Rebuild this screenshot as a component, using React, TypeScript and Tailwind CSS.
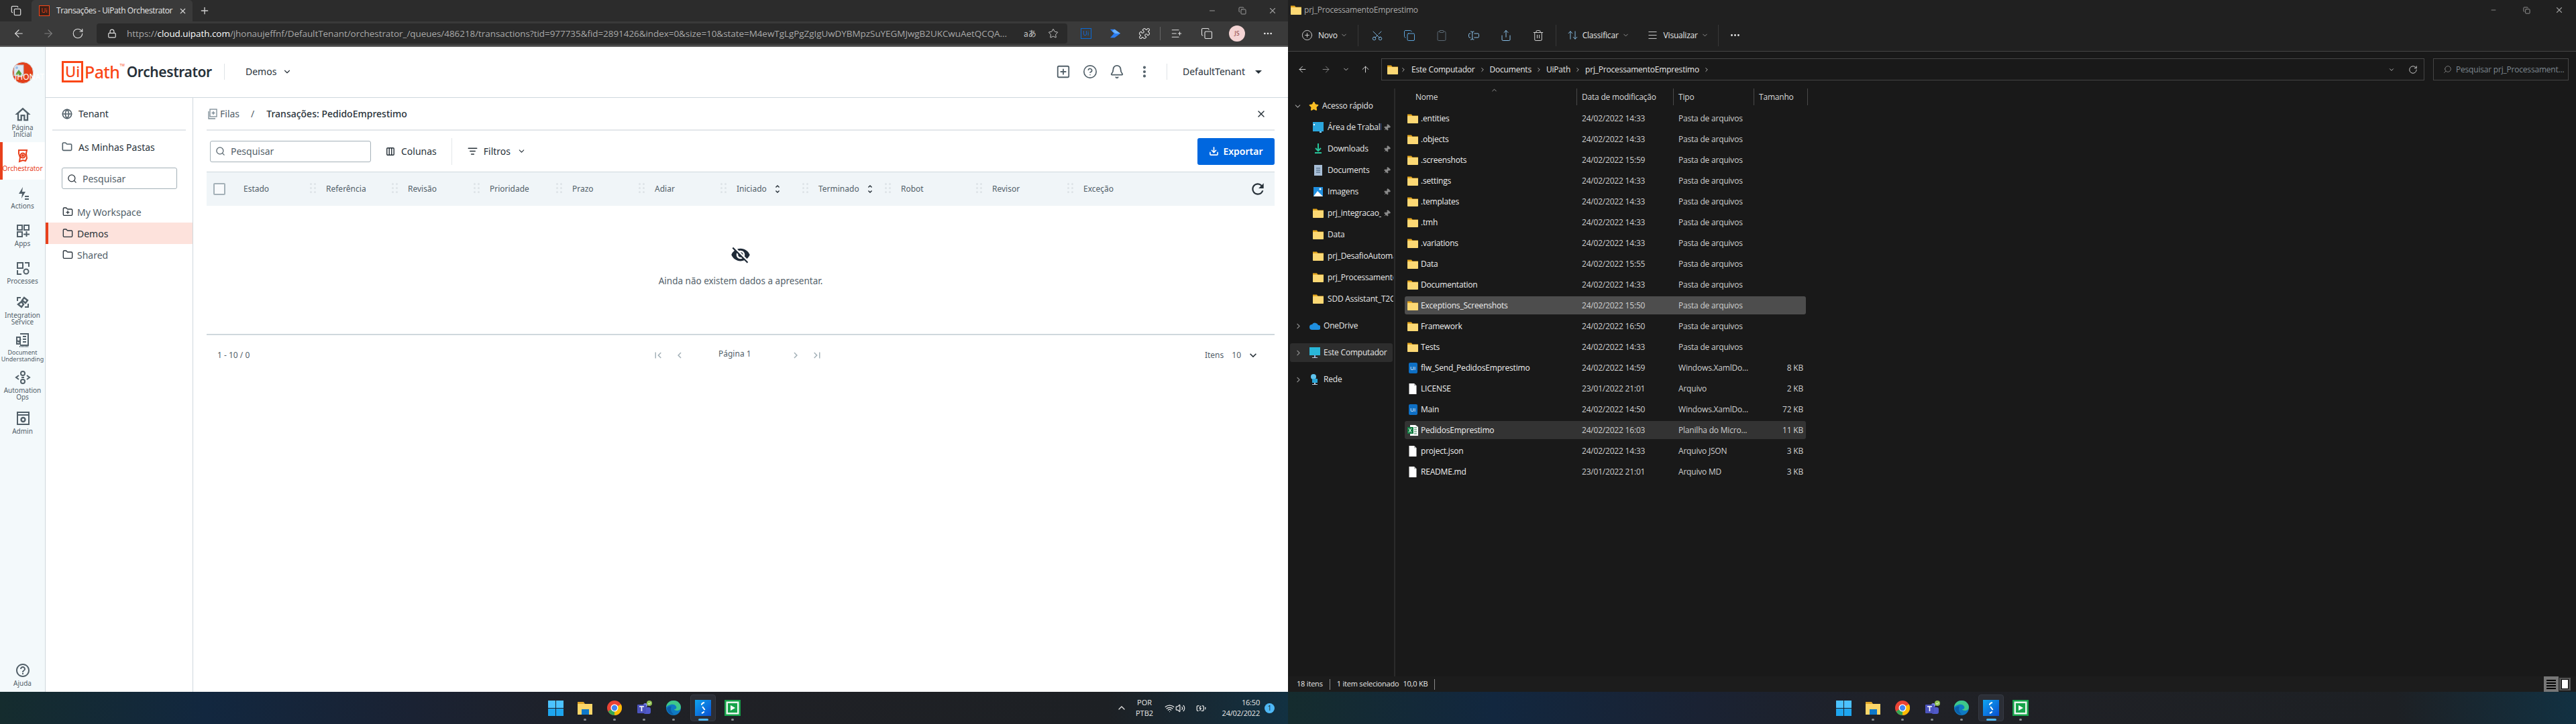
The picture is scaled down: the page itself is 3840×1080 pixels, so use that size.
import React from "react";
import { ArrowLeft, ArrowRight, RotateCw, Lock, X, Plus, Minus, Copy, ChevronDown, ChevronRight, ChevronUp, Search, Ellipsis, EllipsisVertical, Bell, CircleHelp, SquarePlus, Globe, Folder, FolderPlus, Columns3, Download, ListFilter, Scissors, Share, Trash2, ArrowUpDown, Menu, ArrowUp, Pin, CirclePlus, Clipboard, TextCursorInput, Puzzle, ListPlus, Star, Wifi, Volume2, BatteryCharging, Search as Loupe } from "lucide-react";
import { MdVisibilityOff, MdHelpOutline, MdOutlineHome, MdChevronLeft, MdChevronRight, MdFirstPage, MdLastPage, MdKeyboardArrowDown, MdArrowDropDown, MdRefresh, MdUnfoldMore } from "react-icons/md";

const rail = "#526069";

function I({ children, s = 24 }: { children: React.ReactNode; s?: number }) {
  return <svg width={s} height={s} viewBox="0 0 24 24" fill="none" stroke={rail} strokeWidth="2">{children}</svg>;
}

const railIcons: Record<string, React.ReactNode> = {
  actions: <I><path d="M12 3 6 13h5l-1 7 6-10h-5z" fill={rail} stroke="none" /><path d="M15 17h6M15 21h6" /></I>,
  apps: <I><rect x="4" y="4" width="7" height="7" /><rect x="14" y="4" width="7" height="7" /><rect x="4" y="14" width="7" height="7" /><path d="M17.5 13v8M13 17.5h9" /></I>,
  proc: <I><rect x="4" y="4" width="8" height="8" /><path d="M15 4h6v6M4 15v6h6" /><circle cx="17" cy="17" r="3.5" /></I>,
  integ: <I><path d="M4 10V5h5M20 14v5h-5" /><path d="M14 5l5 4-3 4-5-4zM10 11l3 4-3 4-5-4z" strokeWidth="2.4" /></I>,
  doc: <I><path d="M8 3h12v17H8M3 8h5v10H3z" /><path d="M12 7h5M12 11h5M12 15h5M4 13l2 2 3-4" /><path d="M7 22h14" strokeDasharray="1 1" /></I>,
  ops: <I><circle cx="12" cy="6" r="3" /><circle cx="12" cy="18" r="3" /><path d="m6 9-4 3 4 3M18 9l4 3-4 3M10 12h4" /></I>,
  admin: <I><rect x="4" y="3" width="17" height="18" /><path d="M4 7h17" /><circle cx="12.5" cy="14" r="3" strokeWidth="2.4" /></I>,
};

function RailItem({ icon, l1, l2, small }: { icon: React.ReactNode; l1: string; l2?: string; small?: boolean }) {
  const t = small ? "text-[9px] leading-[10px]" : "text-[10px] leading-[10px]";
  return (
    <div className="h-14 flex flex-col items-center justify-center pb-1">
      <div className="h-6 flex items-center justify-center">{icon}</div>
      <div className={`mt-[2px] ${t} text-[#526069] whitespace-nowrap text-center`}>{l1}</div>
      {l2 && <div className={`${t} text-[#526069] whitespace-nowrap text-center`}>{l2}</div>}
    </div>
  );
}

function Rail() {
  return (
    <div className="w-[68px] shrink-0 h-full bg-[#f3f9fb] border-r border-[#cfd8dd] flex flex-col overflow-hidden">
      <div className="h-[86px] pt-[22px] pl-[18px] relative">
        <div className="w-8 h-[33px] rounded-full bg-[#e23f1a] border border-[#ddd] overflow-hidden flex items-start">
          <svg width="18" height="18" viewBox="0 0 18 18" className="ml-[1px] mt-[3px]"><rect x="1" y="1" width="14" height="16" fill="#dfe8f3" stroke="#b8c2cc" /><path d="M2 16 8 8l6 8z" fill="#5a9e3a" /><circle cx="5" cy="5" r="2" fill="#9cc1ea" /></svg>
        </div>
        <div className="absolute left-[22px] top-[38px] text-[12px] leading-[14px] text-white whitespace-nowrap">JHONAT</div>
      </div>
      <RailItem icon={<MdOutlineHome size={28} color={rail} />} l1="Página" l2="Inicial" />
      <div className="h-14 bg-white border-l-4 border-[#e8401c] flex flex-col items-center justify-center pb-1 w-[67px]">
        <div className="h-6 flex items-center justify-center -ml-1">
          <I><g stroke="#e8401c"><path d="M6 4h12l-1 5 1 7-2 4-4-1-5 2 1-6-2-6z" strokeWidth="2" /><circle cx="12" cy="12" r="3.5" /><circle cx="12" cy="12" r="1" fill="#e8401c" /></g></I>
        </div>
        <div className="mt-[2px] text-[10px] leading-[10px] text-[#e8401c] -ml-1 whitespace-nowrap">Orchestrator</div>
      </div>
      <RailItem icon={railIcons.actions} l1="Actions" />
      <RailItem icon={railIcons.apps} l1="Apps" />
      <RailItem icon={railIcons.proc} l1="Processes" />
      <RailItem icon={railIcons.integ} l1="Integration" l2="Service" />
      <RailItem small icon={railIcons.doc} l1="Document" l2="Understanding" />
      <RailItem icon={railIcons.ops} l1="Automation" l2="Ops" />
      <RailItem icon={railIcons.admin} l1="Admin" />
      <div className="mt-auto mb-[-4px]"><RailItem icon={<MdHelpOutline size={24} color={rail} />} l1="Ajuda" /></div>
    </div>
  );
}

function Logo() {
  return (
    <div className="flex items-center pl-6 w-[266px] shrink-0 font-['Noto_Sans',sans-serif]">
      <div className="w-8 h-8 border-[3px] border-[#fa4616] text-[#fa4616] text-[22px] leading-[24px] text-center font-medium">Ui</div>
      <div className="ml-[2px] text-[#fa4616] text-[25px] font-medium leading-8 tracking-[-0.6px]">Path</div>
      <div className="text-[#fa4616] text-[5px] self-start mt-[3px] mr-[3px]">TM</div>
      <div className="text-[#273139] text-[21px] font-semibold leading-8 tracking-[-0.4px]">Orchestrator</div>
    </div>
  );
}

function Header() {
  return (
    <div className="h-[76px] shrink-0 border-b border-[#cfd8dd] flex items-center pb-[2px]">
      <Logo />
      <div className="w-px h-6 bg-[#dfe3e6]" />
      <div className="ml-[31px] flex items-center gap-[9px] text-[14px] text-[#273139]">Demos <ChevronDown size={14} color="#273139" /></div>
      <div className="ml-auto flex items-center">
        <SquarePlus size={22} color="#526069" strokeWidth={2} />
        <CircleHelp size={22} color="#526069" strokeWidth={1.8} className="ml-[18px]" />
        <Bell size={22} color="#526069" strokeWidth={2} className="ml-[18px]" />
        <EllipsisVertical size={22} color="#526069" strokeWidth={2.5} className="ml-[19px]" />
        <div className="w-px h-6 bg-[#dfe3e6] ml-[22px]" />
        <div className="ml-[23px] text-[14px] text-[#273139] whitespace-nowrap">DefaultTenant</div>
        <MdArrowDropDown size={24} color="#273139" className="ml-[8px] mr-[32px]" />
      </div>
    </div>
  );
}

function Folders() {
  return (
    <div className="w-[220px] shrink-0 border-r border-[#cfd8dd] text-[14px] text-[#273139] h-full">
      <div className="mx-[10px] h-[49px] border-b-2 border-[#e3e7ea] flex items-center pl-[14px] gap-[9px]"><Globe size={16} color="#526069" strokeWidth={2.4} />Tenant</div>
      <div className="h-[48px] flex items-center pl-[24px] gap-[9px]"><Folder size={16} color="#526069" strokeWidth={2.4} />As Minhas Pastas</div>
      <div className="ml-6 mt-[7px] w-[172px] h-8 border border-[#a4b1b8] rounded-[3px] flex items-center pl-[7px] gap-[8px] text-[#526069]"><Search size={15} color="#273139" />Pesquisar</div>
      <div className="mt-[18px]">
        <div className="h-8 pl-[25px] flex items-center gap-[6px] text-[#526069]"><FolderPlus size={16} color="#273139" />My Workspace</div>
        <div className="h-8 pl-[21px] flex items-center gap-[6px] bg-[#fde2dc] border-l-4 border-[#e8401c]"><Folder size={16} color="#273139" />Demos</div>
        <div className="h-8 pl-[25px] flex items-center gap-[6px] text-[#526069]"><Folder size={16} color="#273139" />Shared</div>
      </div>
    </div>
  );
}

const cols = [
  { t: "Estado", w: "w-[123px]" }, { t: "Referência", w: "w-[122px]" }, { t: "Revisão", w: "w-[122px]" },
  { t: "Prioridade", w: "w-[123px]" }, { t: "Prazo", w: "w-[123px]" }, { t: "Adiar", w: "w-[122px]" },
  { t: "Iniciado", w: "w-[122px]", sort: true }, { t: "Terminado", w: "w-[123px]", sort: true },
  { t: "Robot", w: "w-[136px]" }, { t: "Revisor", w: "w-[136px]" }, { t: "Exceção", w: "w-[240px]" },
];

function Dots() {
  return <div className="absolute left-[-24px] top-0 grid grid-cols-2 gap-[3px] w-[9px]">{[0, 1, 2, 3, 4, 5].map((i) => <span key={i} className="w-[3px] h-[3px] bg-[#dde3e7] rounded-full" />)}</div>;
}

function MainPane() {
  return (
    <div className="flex-1 pl-5 pr-5 flex flex-col text-[#273139]">
      <div className="h-[49px] border-b-2 border-[#e3e7ea] flex items-center pl-[2px] text-[14px]">
        <svg width="14" height="16" viewBox="0 0 14 16" fill="none" stroke="#7a8a94" strokeWidth="1.3"><rect x="3" y="1" width="10" height="11" /><path d="M1 4v11h10M8 4v5M5.500 6.500h5" /></svg>
        <span className="ml-[4px] text-[#526069]">Filas</span>
        <span className="ml-[17px] text-[#526069]">/</span>
        <span className="ml-[18px] font-medium whitespace-nowrap">Transações: PedidoEmprestimo</span>
        <X size={16} color="#273139" className="ml-auto mr-3" />
      </div>
      <div className="h-[61px] flex items-center text-[14px]">
        <div className="ml-[5px] w-[240px] h-8 border border-[#a4b1b8] rounded-[3px] flex items-center pl-[7px] gap-[8px] text-[#526069]"><Search size={15} color="#526069" />Pesquisar</div>
        <Columns3 size={14} color="#273139" className="ml-[22px]" strokeWidth={2.4} />
        <span className="ml-[9px]">Colunas</span>
        <div className="ml-[22px] w-px h-10 bg-[#e3e7ea]" />
        <ListFilter size={15} color="#273139" className="ml-[23px]" strokeWidth={2.4} />
        <span className="ml-[9px]">Filtros</span>
        <ChevronDown size={13} color="#273139" className="ml-[10px]" />
        <div className="ml-auto w-[115px] h-10 bg-[#0067df] rounded-[3px] flex items-center justify-center gap-[6px] text-white font-semibold"><Download size={15} color="#fff" strokeWidth={2.6} />Exportar</div>
      </div>
      <div className="h-[51px] bg-[#f0f5f8] border-t border-[#cfd8dd] flex items-center text-[12px] text-[#526069]">
        <div className="w-[55px] pl-[10px] shrink-0"><div className="w-[18px] h-[18px] border-2 border-[#a4b1b8] rounded-[2px] bg-white/50" /></div>
        {cols.map((c, i) => (
          <div key={c.t} className={`${c.w} shrink-0 relative flex items-center gap-2`}>
            {i > 0 && <Dots />}
            <span>{c.t}</span>
            {c.sort && <MdUnfoldMore size={16} color="#273139" />}
          </div>
        ))}
        <MdRefresh size={26} color="#273139" className="ml-auto mr-[12px]" />
      </div>
      <div className="h-[193px] border-b-2 border-[#cfd8dd] flex flex-col items-center pt-[58px]">
        <MdVisibilityOff size={30} color="#1f2a37" />
        <div className="mt-[14px] text-[13.5px] leading-5 text-[#526069]">Ainda não existem dados a apresentar.</div>
      </div>
      <div className="h-[56px] pt-[3px] flex items-center text-[12px] text-[#526069] relative">
        <span className="ml-[16px] w-[649px] shrink-0">1 - 10 / 0</span>
        <MdFirstPage size={18} color="#a4b1b8" className="-ml-[1px]" />
        <MdChevronLeft size={18} color="#a4b1b8" className="ml-[14px]" />
        <span className="ml-[49px] -mt-[3px] whitespace-nowrap">Página 1</span>
        <MdChevronRight size={18} color="#a4b1b8" className="ml-[57px]" />
        <MdLastPage size={18} color="#a4b1b8" className="ml-[14px]" />
        <span className="ml-auto">Itens</span>
        <span className="ml-[12px]">10</span>
        <MdKeyboardArrowDown size={20} color="#273139" className="ml-[8px] mr-[22px]" />
      </div>
    </div>
  );
}

function Tile({ active, dot = true, children }: { active?: boolean; dot?: boolean; children: React.ReactNode }) {
  return (
    <div className={`w-[44px] h-12 flex flex-col items-center relative`}>
      <div className={`w-[38px] h-[40px] mt-[4px] rounded-[4px] flex items-center justify-center ${active ? "bg-[#2b2e36] border border-[#363a44]" : ""}`}>{children}</div>
      {dot && <div className={`absolute bottom-[5px] h-[3px] rounded-[2px] ${active ? "w-[15px] bg-[#4fb8f5]" : "w-[4px] bg-[#8b8f94]"}`} />}
    </div>
  );
}

function TaskIcons({ id }: { id: string }) {
  return (
    <div className="flex items-center pl-[806px]">
      <Tile dot={false}><svg width="23" height="23" viewBox="0 0 23 23"><rect width="11" height="11" fill="#4cc2ff" /><rect x="12" width="11" height="11" fill="#4cc2ff" /><rect y="12" width="11" height="11" fill="#1ea5ee" /><rect x="12" y="12" width="11" height="11" fill="#1ea5ee" /></svg></Tile>
      <Tile><svg width="24" height="24" viewBox="0 0 24 24"><path d="M1 3h9l2 3h11v16H1z" fill="#e0a526" /><rect x="1" y="6" width="22" height="16" fill="#fcd669" /><rect x="7" y="14" width="11" height="8" fill="#0f78c8" /></svg></Tile>
      <Tile><svg width="24" height="24" viewBox="0 0 24 24"><circle cx="12" cy="12" r="11" fill="#ea4335" /><path d="M12 12 2.500 17A11 11 0 0 0 12 23z" fill="#34a853" /><path d="M12 12v11A11 11 0 0 0 23 12c0-2-.5-4-1.500-5.500z" fill="#fbbc05" /><circle cx="12" cy="12" r="5.500" fill="#fff" /><circle cx="12" cy="12" r="4.200" fill="#4285f4" /></svg></Tile>
      <Tile><svg width="24" height="24" viewBox="0 0 24 24"><circle cx="14" cy="8" r="3" fill="#7b83eb" /><rect x="11" y="11" width="11" height="10" rx="3" fill="#5059c9" /><rect x="2" y="7" width="13" height="13" rx="1" fill="#4b53bc" /><path d="M5 10h7M8.500 10v7" stroke="#fff" strokeWidth="1.600" /><circle cx="20" cy="5" r="4" fill="#92c353" /><path d="m18 5 1.500 1.500L22 4" stroke="#fff" fill="none" /></svg></Tile>
      <Tile><svg width="24" height="24" viewBox="0 0 24 24"><circle cx="12" cy="12" r="11" fill="#0f7ac4" /><path d="M1 12C1 5 6 1 12 1c7 0 11 5 11 10 0 3-3 5-6 5-2 0-4-1-4-2 3 0 4-2 3-4-1-3-5-4-8-3-4 1-7 3-7 5z" fill="#3ec78a" /><path d="M9 10c-2 3-1 9 4 12-6 0-10-4-11-9 1-2 4-4 7-3z" fill="#0b5ea8" /></svg></Tile>
      <Tile active><svg width="24" height="24" viewBox="0 0 24 24"><defs><linearGradient id={id} x1="0" y1="0" x2="1" y2="1"><stop offset="0" stopColor="#0ea5f0" /><stop offset="1" stopColor="#0a4fd0" /></linearGradient></defs><rect width="24" height="24" fill={`url(#${id})`} /><path d="M14 4c-4 1-5 3-3 6l3 4c1 2 0 4-4 6" stroke="#fff" strokeWidth="2" fill="none" strokeDasharray="6 2.500" /></svg></Tile>
      <Tile><svg width="24" height="24" viewBox="0 0 24 24"><rect width="24" height="24" fill="#16a34a" /><rect x="2.500" y="2.500" width="19" height="19" fill="#e8f5ec" /><rect x="5" y="5" width="14" height="14" fill="#16a34a" /><path d="m9 8 7 4-7 4z" fill="#fff" /></svg></Tile>
    </div>
  );
}

const taskbarBg = "h-12 shrink-0 flex items-center text-white bg-[linear-gradient(90deg,#152c2e_0%,#12273f_16%,#1a2233_32%,#202126_48%,#1d2024_86%,#123142_100%)]";

function LeftWindow() {
  return (
    <div className="w-[1920px] shrink-0 h-full flex flex-col font-['Noto_Sans',sans-serif]">
      <div className="h-8 shrink-0 bg-[#2c2c2c] flex items-center font-['Open_Sans',sans-serif]">
        <div className="w-[47px] flex justify-center"><Copy size={16} color="#d0d0d0" /></div>
        <div className="w-[240px] h-8 bg-[#3a3a3a] rounded-t-[5px] flex items-center pl-[11px]">
          <div className="w-4 h-4 border border-[#fa4616] bg-[#3a2018] text-[#fa4616] text-[9px] leading-[14px] text-center">Ui</div>
          <span className="ml-[2px] pl-[8px] text-[12px] text-[#e8e8e8] whitespace-nowrap w-[186px] tracking-[-0.4px]">Transações - UiPath Orchestrator</span>
          <X size={13} color="#d8d8d8" className="ml-[4px]" />
        </div>
        <Plus size={16} color="#d0d0d0" className="ml-[10px]" />
        <Minus size={12} color="#9a9a9a" className="ml-auto mr-[33px]" />
        <Copy size={12} color="#9a9a9a" className="mr-[32px]" />
        <X size={14} color="#9a9a9a" className="mr-[16px]" />
      </div>
      <div className="h-[38px] shrink-0 bg-[#3a3a3a] border-b-2 border-[#5c5c5c] flex items-center">
        <ArrowLeft size={18} color="#e0e0e0" className="ml-[19px]" strokeWidth={1.5} />
        <ArrowRight size={18} color="#7f7f7f" className="ml-[26px]" strokeWidth={1.5} />
        <RotateCw size={18} color="#e0e0e0" className="ml-[26px]" strokeWidth={1.5} />
        <div className="ml-[19px] w-[1447px] h-[30px] bg-[#2a2a2a] rounded-[4px] flex items-center pl-[16px]">
          <Lock size={14} color="#e0e0e0" />
          <span className="ml-[15px] w-[1318px] shrink-0 whitespace-nowrap text-[13.5px] tracking-[-0.06px] text-[#a8a8a8] font-['Open_Sans',sans-serif]">https://<span className="text-white">cloud.uipath.com</span>/jhonaujeffnf/DefaultTenant/orchestrator_/queues/486218/transactions?tid=977735&amp;fid=2891426&amp;index=0&amp;size=10&amp;state=M4ewTgLgPgZgIgUwDYBMpzSuYEGMJwgB2UKCwuAetQCQA...</span>
          <span className="ml-[19px] text-[12px] text-[#c8c8c8] font-['Noto_Sans_CJK_JP',sans-serif]">aあ</span>
          <Star size={16} color="#c8c8c8" className="ml-[17px]" strokeWidth={1.5} />
        </div>
        <div className="ml-[20px] w-4 h-4 border border-[#0a6bd8] text-[#0a6bd8] text-[9px] leading-[14px] text-center">Ui</div>
        <svg width="17" height="14" viewBox="0 0 18 22" preserveAspectRatio="none" className="ml-[27px]"><path d="M1 1h7l9 10-9 10H1l6-10z" fill="#2b7cf0" /><path d="M8 1l9 10H9L4 5z" fill="#69b1ff" /></svg>
        <Puzzle size={18} color="#e0e0e0" className="ml-[26px]" strokeWidth={1.5} />
        <div className="w-px h-5 bg-[#666] ml-[14px]" />
        <ListPlus size={18} color="#e0e0e0" className="ml-[15px]" strokeWidth={1.5} />
        <Copy size={18} color="#e0e0e0" className="ml-[27px]" strokeWidth={1.5} />
        <div className="ml-[24px] w-6 h-6 rounded-full bg-[#f4d4d4] text-[#8a3a3a] text-[9px] flex items-center justify-center">JS</div>
        <Ellipsis size={16} color="#e8e8e8" className="ml-[26px]" />
      </div>
      <div className="h-[962px] shrink-0 bg-white flex">
        <Rail />
        <div className="flex-1 flex flex-col min-w-0">
          <Header />
          <div className="flex-1 flex min-h-0">
            <Folders />
            <MainPane />
          </div>
        </div>
      </div>
      <div className={taskbarBg}>
        <TaskIcons id="sg1" />
        <div className="ml-auto flex items-center font-['Open_Sans',sans-serif] text-[11px] text-[#e8e8e8]">
          <ChevronUp size={16} color="#e0e0e0" />
          <div className="ml-[7px] w-[38px] text-center leading-[16px]"><div>POR</div><div>PTB2</div></div>
          <Wifi size={15} color="#e8e8e8" className="ml-[11px]" />
          <Volume2 size={15} color="#e8e8e8" className="ml-[1px]" />
          <BatteryCharging size={15} color="#e8e8e8" className="ml-[16px]" />
          <div className="ml-[18px] w-[62px] text-right leading-[16px] tracking-[-0.2px]"><div>16:50</div><div>24/02/2022</div></div>
          <div className="ml-[7px] mr-[20px] w-[15px] h-[15px] rounded-full bg-[#4fb8f5] text-[#0d2030] text-[10px] flex items-center justify-center">1</div>
        </div>
      </div>
    </div>
  );
}

const FolderIc = ({ s = 16 }: { s?: number }) => (
  <svg width={s} height={s} viewBox="0 0 16 16" className="shrink-0"><path d="M0 1.500h6l1.500 2H16v11H0z" fill="#e5a71f" /><rect y="4" width="16" height="11" rx="1" fill="#fcd874" /></svg>
);
const FileIc = () => <svg width="16" height="16" viewBox="0 0 16 16" className="shrink-0"><path d="M2.500 0H10l3.500 3.500V16H2.500z" fill="#fff" /><path d="M10 0v3.500h3.500z" fill="#bbb" /></svg>;
const UiIc = () => <div className="w-4 shrink-0 flex justify-center"><div className="w-[13px] h-4 bg-[#0e6fc4] rounded-[2px] text-white text-[8px] leading-4 text-center tracking-normal">Ui</div></div>;
const XlIc = () => <svg width="16" height="16" viewBox="0 0 16 16" className="shrink-0"><path d="M4 0h8l4 3v13H4z" fill="#fff" /><path d="M10 4h4M10 7h4M10 10h4M10 13h4" stroke="#217346" /><rect y="3" width="9" height="10" fill="#107c41" /><path d="m2 5 4 6M6 5l-4 6" stroke="#fff" /></svg>;

const files: [string, string, string, string, string][] = [
  [".entities", "24/02/2022 14:33", "Pasta de arquivos", "", "f"],
  [".objects", "24/02/2022 14:33", "Pasta de arquivos", "", "f"],
  [".screenshots", "24/02/2022 15:59", "Pasta de arquivos", "", "f"],
  [".settings", "24/02/2022 14:33", "Pasta de arquivos", "", "f"],
  [".templates", "24/02/2022 14:33", "Pasta de arquivos", "", "f"],
  [".tmh", "24/02/2022 14:33", "Pasta de arquivos", "", "f"],
  [".variations", "24/02/2022 14:33", "Pasta de arquivos", "", "f"],
  ["Data", "24/02/2022 15:55", "Pasta de arquivos", "", "f"],
  ["Documentation", "24/02/2022 14:33", "Pasta de arquivos", "", "f"],
  ["Exceptions_Screenshots", "24/02/2022 15:50", "Pasta de arquivos", "", "f"],
  ["Framework", "24/02/2022 16:50", "Pasta de arquivos", "", "f"],
  ["Tests", "24/02/2022 14:33", "Pasta de arquivos", "", "f"],
  ["flw_Send_PedidosEmprestimo", "24/02/2022 14:59", "Windows.XamlDo...", "8 KB", "u"],
  ["LICENSE", "23/01/2022 21:01", "Arquivo", "2 KB", "d"],
  ["Main", "24/02/2022 14:50", "Windows.XamlDo...", "72 KB", "u"],
  ["PedidosEmprestimo", "24/02/2022 16:03", "Planilha do Micro...", "11 KB", "x"],
  ["project.json", "24/02/2022 14:33", "Arquivo JSON", "3 KB", "d"],
  ["README.md", "23/01/2022 21:01", "Arquivo MD", "3 KB", "d"],
];

function FileRow({ f }: { f: [string, string, string, string, string] }) {
  const bg = f[0] === "Exceptions_Screenshots" ? "bg-[#4d4d4d]" : f[0] === "PedidosEmprestimo" ? "bg-[#333333]" : "";
  return (
    <div className={`h-[27px] mb-1 ml-[14px] w-[598px] pl-1 rounded-[3px] flex items-center text-[12px] ${bg}`}>
      {f[4] === "f" ? <FolderIc /> : f[4] === "u" ? <UiIc /> : f[4] === "x" ? <XlIc /> : <FileIc />}
      <span className="ml-1 w-[240px] shrink-0 text-[#efefef] whitespace-nowrap">{f[0]}</span>
      <span className="w-[144px] shrink-0 text-[#cfcfcf]">{f[1]}</span>
      <span className="w-[100px] shrink-0 text-[#cfcfcf] whitespace-nowrap">{f[2]}</span>
      <span className="w-[86px] shrink-0 text-right text-[#cfcfcf]">{f[3]}</span>
    </div>
  );
}

function NavRow({ icon, text, pin }: { icon: React.ReactNode; text: string; pin?: boolean }) {
  return (
    <div className="h-8 flex items-center pl-[37px]">
      {icon}
      <span className={`ml-[6px] overflow-hidden whitespace-nowrap ${pin ? "w-[80px]" : "w-[98px]"}`}>{text}</span>
      {pin && <Pin size={11} color="#8a8a8a" fill="#8a8a8a" className="ml-[3px] rotate-45" />}
    </div>
  );
}

function NavRoot({ icon, text, hi }: { icon: React.ReactNode; text: string; hi?: boolean }) {
  return (
    <div className={`h-7 mt-3 ml-[3px] w-[153px] rounded-[3px] flex items-center pl-[6px] ${hi ? "bg-[#2d2d2d]" : ""}`}>
      <ChevronRight size={13} color="#8a8a8a" />
      <div className="ml-[10px] w-4">{icon}</div>
      <span className="ml-[5px] whitespace-nowrap">{text}</span>
    </div>
  );
}

const ic = (d: React.ReactNode) => <svg width="16" height="16" viewBox="0 0 16 16" className="shrink-0">{d}</svg>;

function CmdIcon({ children, ml }: { children: React.ReactNode; ml: string }) {
  return <div className={ml}>{children}</div>;
}

function RightWindow() {
  return (
    <div className="w-[1920px] shrink-0 h-full flex flex-col bg-[#191919] font-['Open_Sans',sans-serif] text-[12px] text-[#e8e8e8] tracking-[-0.2px]">
      <div className="h-[30px] shrink-0 bg-[#202020] flex items-center pl-1">
        <FolderIc />
        <span className="ml-1 text-[#a8a8a8]">prj_ProcessamentoEmprestimo</span>
        <Minus size={10} color="#9a9a9a" className="ml-auto mr-[39px]" />
        <Copy size={11} color="#9a9a9a" className="mr-[36px]" />
        <X size={14} color="#9a9a9a" className="mr-[18px]" />
      </div>
      <div className="h-[47px] shrink-0 bg-[#202020] border-b border-[#454545] flex items-center pb-[1px]">
        <CirclePlus size={17} color="#d8d8d8" strokeWidth={1.3} className="ml-[20px]" />
        <span className="ml-[8px]">Novo</span>
        <ChevronDown size={11} color="#9a9a9a" className="ml-[4px]" />
        <div className="ml-[15px] w-px h-8 bg-[#383838]" />
        <CmdIcon ml="ml-[19px]"><Scissors size={18} color="#7db5e0" strokeWidth={1.3} className="-rotate-90" /></CmdIcon>
        <CmdIcon ml="ml-[30px]"><Copy size={18} color="#5fa8e0" strokeWidth={1.3} /></CmdIcon>
        <CmdIcon ml="ml-[30px]"><Clipboard size={18} color="#5c6a75" strokeWidth={1.3} /></CmdIcon>
        <CmdIcon ml="ml-[30px]"><TextCursorInput size={18} color="#8cc4ee" strokeWidth={1.3} /></CmdIcon>
        <CmdIcon ml="ml-[30px]"><Share size={18} color="#8cc4ee" strokeWidth={1.3} /></CmdIcon>
        <CmdIcon ml="ml-[30px]"><Trash2 size={18} color="#d8d8d8" strokeWidth={1.3} /></CmdIcon>
        <div className="ml-[17px] w-px h-8 bg-[#383838]" />
        <ArrowUpDown size={17} color="#8cc4ee" strokeWidth={1.3} className="ml-[16px]" />
        <span className="ml-[6px]">Classificar</span>
        <ChevronDown size={11} color="#9a9a9a" className="ml-[5px]" />
        <Menu size={17} color="#d8d8d8" strokeWidth={1.3} className="ml-[26px]" />
        <span className="ml-[8px]">Visualizar</span>
        <ChevronDown size={11} color="#9a9a9a" className="ml-[5px]" />
        <div className="ml-[14px] w-px h-8 bg-[#383838]" />
        <Ellipsis size={17} color="#e8e8e8" className="ml-[16px]" />
      </div>
      <div className="h-[55px] shrink-0 flex items-start pt-[10px]">
        <div className="h-[33px] flex items-center">
          <ArrowLeft size={15} color="#e0e0e0" className="ml-[14px]" strokeWidth={1.5} />
          <ArrowRight size={15} color="#8a8a8a" className="ml-[20px]" strokeWidth={1.5} />
          <ChevronDown size={11} color="#d0d0d0" className="ml-[17px]" />
          <ArrowUp size={15} color="#e0e0e0" className="ml-[16px]" strokeWidth={1.5} />
        </div>
        <div className="ml-[16px] w-[1555px] h-[33px] border border-[#454545] flex items-center pl-2">
          <FolderIc />
          <ChevronRight size={10} color="#d0d0d0" className="ml-[3px]" />
          <span className="ml-[7px] whitespace-nowrap">Este Computador</span>
          <ChevronRight size={10} color="#d0d0d0" className="ml-[6px]" />
          <span className="ml-[6px]">Documents</span>
          <ChevronRight size={10} color="#d0d0d0" className="ml-[6px]" />
          <span className="ml-[6px]">UiPath</span>
          <ChevronRight size={10} color="#d0d0d0" className="ml-[6px]" />
          <span className="ml-[6px] whitespace-nowrap">prj_ProcessamentoEmprestimo</span>
          <ChevronRight size={10} color="#d0d0d0" className="ml-[6px]" />
          <ChevronDown size={10} color="#d0d0d0" className="ml-auto" />
          <RotateCw size={14} color="#d8d8d8" strokeWidth={1.5} className="ml-[20px] mr-[9px]" />
        </div>
        <div className="ml-[13px] w-[202px] h-[33px] border border-[#454545] flex items-center pl-[14px] text-[#7d8790]">
          <Loupe size={13} color="#8a8a8a" strokeWidth={1.5} className="-scale-x-100" />
          <span className="ml-[6px] whitespace-nowrap">Pesquisar prj_Processament...</span>
        </div>
      </div>
      <div className="flex-1 flex min-h-0">
        <div className="w-[160px] shrink-0 border-r-2 border-[#2b2b2b] pt-[10px] overflow-hidden">
          <div className="h-8 flex items-center pl-[8px]">
            <ChevronDown size={13} color="#a0a0a0" />
            <Star size={15} color="#fbbf24" fill="#fbbf24" className="ml-[10px]" />
            <span className="ml-[5px] whitespace-nowrap">Acesso rápido</span>
          </div>
          <NavRow pin text="Área de Trabalho" icon={ic(<><rect width="16" height="14" fill="#2ba6dd" /><rect x="1" y="3" width="2" height="2" fill="#fff" /><rect x="10" y="14" width="3" height="2" fill="#7fc8ee" /></>)} />
          <NavRow pin text="Downloads" icon={ic(<path d="M8 0v10M4 7l4 4 4-4M3 14h10" stroke="#27c59a" strokeWidth="2" fill="none" />)} />
          <NavRow pin text="Documents" icon={ic(<><rect x="2" width="12" height="16" fill="#a8bed6" /><path d="M5 5h6M5 8h6M5 11h6" stroke="#3f5a75" /></>)} />
          <NavRow pin text="Imagens" icon={ic(<><rect x="1" y="1" width="14" height="14" fill="#1f8fe0" /><path d="m1 15 6-8 8 8z" fill="#fff" /><circle cx="11" cy="4" r="1.500" fill="#fff" /></>)} />
          <NavRow pin text="prj_integracao_" icon={<FolderIc />} />
          <NavRow text="Data" icon={<FolderIc />} />
          <NavRow text="prj_DesafioAutomacao" icon={<FolderIc />} />
          <NavRow text="prj_ProcessamentoEmprestimo" icon={<FolderIc />} />
          <NavRow text="SDD Assistant_T2C" icon={<FolderIc />} />
          <div className="-mt-[2px]"><NavRoot text="OneDrive" icon={ic(<path d="M4 14a4 4 0 0 1 0-8 5 5 0 0 1 9 1 3.500 3.500 0 0 1 0 7z" fill="#1f8fe0" />)} /></div>
          <NavRoot hi text="Este Computador" icon={ic(<><rect width="16" height="12" fill="#29b6d8" /><rect x="7" y="12" width="2" height="3" fill="#9ad" /><rect x="4" y="15" width="8" height="1" fill="#bcd" /></>)} />
          <NavRoot text="Rede" icon={ic(<><circle cx="6" cy="4" r="4" fill="#5fc4ee" /><rect x="4" y="7" width="8" height="6" fill="#29a6d8" /><rect x="7" y="13" width="2" height="2" fill="#bcd" /><rect x="4" y="15" width="8" height="1" fill="#bcd" /></>)} />
        </div>
        <div className="flex-1 min-w-0">
          <div className="h-[25px] mb-[6px] flex relative text-[#d8d8d8]">
            <ChevronUp size={11} color="#a0a0a0" className="absolute left-[142px] top-[-3px]" />
            <div className="w-[271px] pl-[30px] h-full flex items-center border-r border-[#4a4a4a] shrink-0">Nome</div>
            <div className="w-[144px] pl-[7px] h-full flex items-center border-r border-[#4a4a4a] shrink-0 whitespace-nowrap">Data de modificação</div>
            <div className="w-[120px] pl-[7px] h-full flex items-center border-r border-[#4a4a4a] shrink-0">Tipo</div>
            <div className="w-[80px] pl-[7px] h-full flex items-center border-r border-[#4a4a4a] shrink-0">Tamanho</div>
          </div>
          {files.map((f) => <FileRow key={f[0]} f={f} />)}
        </div>
      </div>
      <div className="h-[23px] shrink-0 bg-[#1c1c1c] flex items-center text-[11px] pl-[13px]">
        <span>18 itens</span>
        <div className="ml-[10px] w-px h-4 bg-[#8a8a8a]" />
        <span className="ml-[10px] whitespace-nowrap">1 item selecionado</span>
        <span className="ml-[6px] whitespace-nowrap">10,0 KB</span>
        <div className="ml-[10px] w-px h-4 bg-[#8a8a8a]" />
        <div className="ml-auto w-[22px] h-[23px] bg-[#777] flex flex-col items-center justify-center gap-[2px]"><span className="w-[14px] h-[2px] bg-black" /><span className="w-[14px] h-[2px] bg-black" /><span className="w-[14px] h-[2px] bg-black" /><span className="w-[14px] h-[2px] bg-black" /></div>
        <div className="ml-[1px] mr-2 w-[17px] h-[19px] bg-[#555] flex items-center justify-center"><span className="w-[11px] h-[15px] bg-white border border-black" /></div>
      </div>
      <div className={taskbarBg}><TaskIcons id="sg2" /></div>
    </div>
  );
}

export default function App() {
  return (
    <div className="w-[3840px] h-[1080px] flex overflow-hidden">
      <LeftWindow />
      <RightWindow />
    </div>
  );
}
